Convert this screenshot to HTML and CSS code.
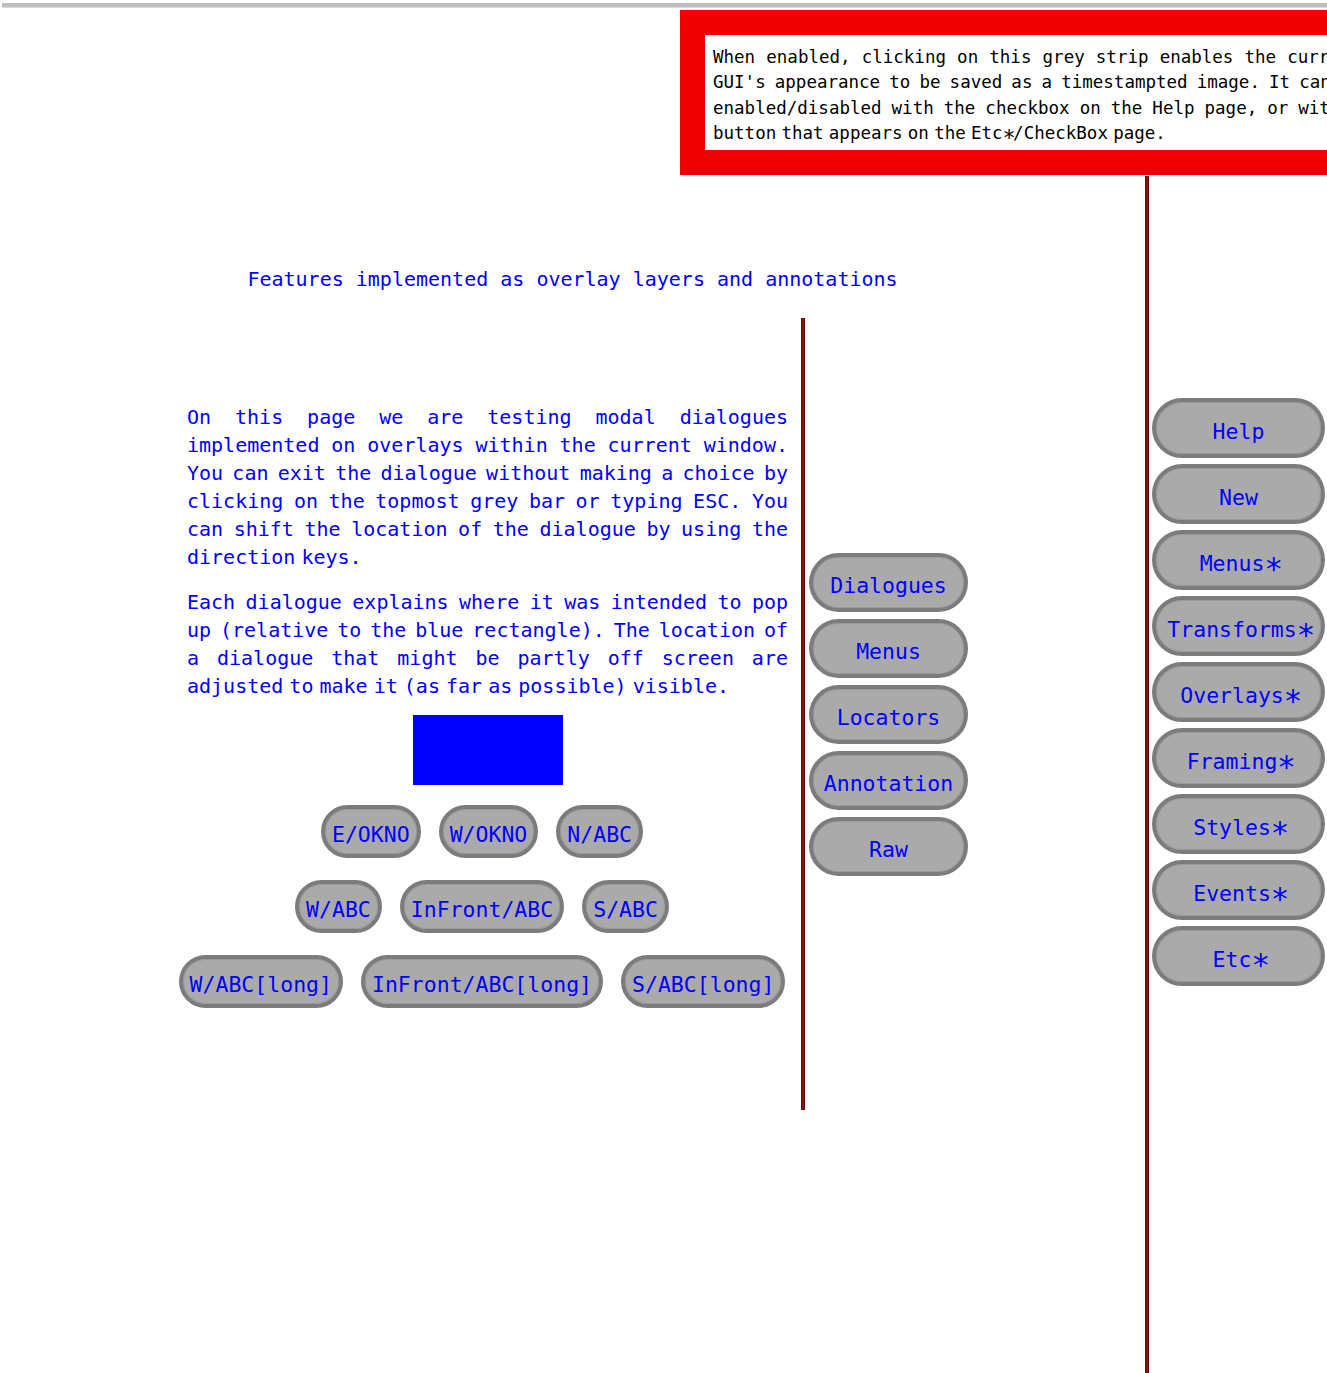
FILE: index.html
```html
<!DOCTYPE html>
<html>
<head>
<meta charset="utf-8">
<title>Overlays</title>
<link rel="stylesheet" href="styles.css">
</head>
<body>
<div class="strip"></div>
<div class="screen">
  <div class="left">
    <div class="title">Features implemented as overlay layers and annotations</div>
    <div class="row">
      <div class="col">
        <div class="para">
          <div class="ln">On this page we are testing modal dialogues</div>
          <div class="ln">implemented on overlays within the current window.</div>
          <div class="ln">You can exit the dialogue without making a choice by</div>
          <div class="ln">clicking on the topmost grey bar or typing ESC. You</div>
          <div class="ln">can shift the location of the dialogue by using the</div>
          <div class="ln last">direction keys.</div>
        </div>
        <div class="para para2">
          <div class="ln">Each dialogue explains where it was intended to pop</div>
          <div class="ln">up (relative to the blue rectangle). The location of</div>
          <div class="ln">a dialogue that might be partly off screen are</div>
          <div class="ln last">adjusted to make it (as far as possible) visible.</div>
        </div>
        <div class="rectwrap"><div class="bluerect"></div></div>
        <div class="brow first">
          <div class="btn small">E/OKNO</div>
          <div class="btn small">W/OKNO</div>
          <div class="btn small">N/ABC</div>
        </div>
        <div class="brow">
          <div class="btn small">W/ABC</div>
          <div class="btn small">InFront/ABC</div>
          <div class="btn small">S/ABC</div>
        </div>
        <div class="brow">
          <div class="btn small">W/ABC[long]</div>
          <div class="btn small">InFront/ABC[long]</div>
          <div class="btn small">S/ABC[long]</div>
        </div>
      </div>
      <div class="vline"></div>
      <div class="midcol">
        <div class="btn mid">Dialogues</div>
        <div class="btn mid">Menus</div>
        <div class="btn mid">Locators</div>
        <div class="btn mid">Annotation</div>
        <div class="btn mid">Raw</div>
      </div>
    </div>
  </div>
  <div class="vline full"></div>
  <div class="right">
    <div class="btn side">Help</div>
    <div class="btn side">New</div>
    <div class="btn side"><span>Menus<span class="ast">∗</span></span></div>
    <div class="btn side"><span>Transforms<span class="ast">∗</span></span></div>
    <div class="btn side"><span>Overlays<span class="ast">∗</span></span></div>
    <div class="btn side"><span>Framing<span class="ast">∗</span></span></div>
    <div class="btn side"><span>Styles<span class="ast">∗</span></span></div>
    <div class="btn side"><span>Events<span class="ast">∗</span></span></div>
    <div class="btn side"><span>Etc<span class="ast">∗</span></span></div>
  </div>
</div>
<div class="tip">
  <div class="tipinner">
    <div class="tl">When enabled, clicking on this grey strip enables the current</div>
    <div class="tl">GUI's appearance to be saved as a timestampted image. It can be</div>
    <div class="tl">enabled/disabled with the checkbox on the Help page, or with a</div>
    <div class="tl last">button that appears on the Etc<span class="ast tast">∗</span>/CheckBox page.</div>
  </div>
</div>
</body>
</html>
```
FILE: styles.css
```css
html, body {
  margin: 0;
  padding: 0;
}
body {
  width: 1327px;
  height: 1373px;
  overflow: hidden;
  position: relative;
  background: #ffffff;
  font-family: "DejaVu Sans Mono", "Liberation Mono", monospace;
  color: #0000ff;
}
.strip {
  height: 5px;
  margin: 3px 0 0 2px;
  background: #bdbdbd;
  border-bottom: 1px solid #dcdcdc;
  box-sizing: border-box;
}
.screen {
  display: flex;
  height: 1365px;
}
.left {
  flex: 0 0 1145px;
  display: flex;
  flex-direction: column;
  align-items: center;
  padding-top: 259px;
  box-sizing: border-box;
}
.title {
  font-size: 20px;
  line-height: 24px;
  white-space: nowrap;
}
.row {
  margin-top: 27px;
  height: 792px;
  display: flex;
  align-items: center;
}
.col {
  align-self: flex-start;
  width: 610px;
  padding-top: 85px;
  margin-right: 14px;
}
.para {
  margin-left: 10px;
  width: 601px;
  font-size: 20px;
  line-height: 28px;
  word-spacing: -6px;
}
.para2 {
  margin-top: 17px;
}
.ln {
  white-space: nowrap;
  text-align: justify;
  text-align-last: justify;
}
.ln.last {
  text-align-last: left;
}
.rectwrap {
  margin-left: 10px;
  width: 601px;
  margin-top: 15px;
  display: flex;
  justify-content: center;
}
.bluerect {
  width: 150px;
  height: 70px;
  background: #0000ff;
}
.brow {
  display: flex;
  justify-content: center;
  gap: 18px;
  margin-top: 22px;
}
.brow.first {
  margin-top: 20px;
}
.btn {
  box-sizing: border-box;
  background: #aaaaaa;
  border: 4px solid #7c7c7c;
  box-shadow: inset 0 0 0 1px #9a9a9a;
  color: #0000ff;
  font-size: 21.5px;
  line-height: 26px;
  display: flex;
  align-items: center;
  justify-content: center;
  white-space: nowrap;
}
.btn.small {
  height: 53px;
  padding: 6px 7px 0;
  border-radius: 27px;
}
.ast {
  display: inline-block;
  font-size: 1.45em;
  width: 0.415em;
  line-height: 0;
  text-align: center;
  vertical-align: -0.1em;
}
.ast.tast {
  font-size: 1.25em;
  width: 0.482em;
  vertical-align: -0.08em;
}
.vline {
  width: 4px;
  align-self: stretch;
  background: linear-gradient(to right, #5e0000, #9a1515 50%, #5e0000);
}
.vline.full {
  margin-top: 168px;
}
.midcol {
  margin-left: 4px;
  display: flex;
  flex-direction: column;
  gap: 7px;
}
.btn.mid {
  width: 159px;
  height: 59px;
  border-radius: 30px;
  padding-top: 7px;
}
.right {
  margin-left: 3px;
  display: flex;
  flex-direction: column;
  justify-content: center;
  gap: 6px;
  padding-top: 3px;
}
.btn.side {
  width: 173px;
  height: 60px;
  border-radius: 30px;
  padding-top: 7px;
}
.tip {
  position: absolute;
  left: 680px;
  top: 10px;
  border: 25px solid #ee0000;
  background: #ffffff;
  padding: 10px 8px 4px 8px;
  color: #000000;
  font-size: 17.5px;
  line-height: 25.3px;
  word-spacing: -5.3px;
}
.tl {
  width: 648px;
  white-space: nowrap;
  text-align: justify;
  text-align-last: justify;
}
.tl.last {
  text-align-last: left;
}
```
